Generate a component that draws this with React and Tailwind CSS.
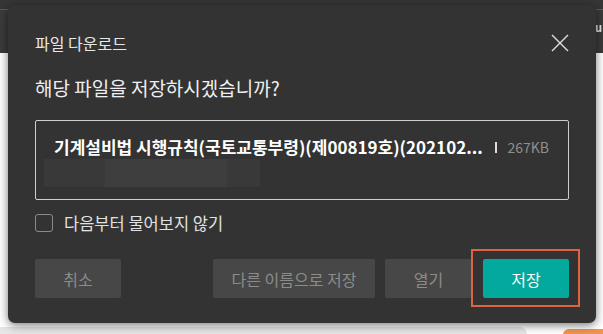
import React from "react";

const font = {
  fontFamily: '"Noto Sans CJK KR", "Noto Sans", sans-serif',
};

const App = () => {
  return (
    <div
      className="relative w-[603px] h-[334px] overflow-hidden bg-white flex flex-col"
      style={font}
    >
      {/* page behind the dialog */}
      <div className="h-[9px] bg-[#363636]" />
      <div className="h-px bg-[#5a5a5a]" />
      <div className="h-[43px] bg-[#3b3b3b] flex justify-end items-center">
        <span className="text-[11px] leading-none text-[#e6e6e6] font-bold mr-px mt-[-8px]">u</span>
      </div>
      <div className="flex-1 bg-white" />
      <div className="h-[7px] flex items-start">
        <div className="w-[527px] h-[7px] bg-[#e6e6e6] rounded-tr-[8px]" />
        <div className="flex-1" />
        <div className="w-[40px] h-[6px] mt-[2px] bg-[#f3934f] rounded-tl-[10px]" />
      </div>

      {/* dialog */}
      <div className="absolute left-[8px] top-[5px] w-[588px] h-[318px] rounded-[7px] bg-[#333333] shadow-[0_2px_10px_rgba(0,0,0,0.55)] px-[27px] flex flex-col">
        <div className="mt-[28px] h-[20px] flex items-center justify-between">
          <span className="text-[16px] text-[#e8e8e8]">파일 다운로드</span>
          <svg width="18" height="18" viewBox="0 0 18 18">
            <path d="M1 1 L17 17 M17 1 L1 17" stroke="#e0e0e0" strokeWidth="1.4" />
          </svg>
        </div>

        <div className="mt-[22px] h-[26px] flex items-center">
          <span className="text-[19px] text-[#efefef]">해당 파일을 저장하시겠습니까?</span>
        </div>

        <div className="mt-[19px] h-[80px] border border-[#cfcfcf] rounded-[2px] flex flex-col">
          <div className="mt-[15px] h-[22px] pl-[18px] pr-[19px] flex items-center">
            <span className="text-[17px] font-bold text-white whitespace-nowrap">
              기계설비법 시행규칙(국토교통부령)(제00819호)(202102...
            </span>
            <div className="flex-1" />
            <span className="w-[2px] h-[11px] bg-[#dcdcdc] mr-[10px]" />
            <span className="text-[14px] text-[#8f8f8f]">267KB</span>
          </div>
          <div className="mt-[1px] ml-[8px] h-[28px] flex">
            <div className="w-[61px] bg-[#393939]" />
            <div className="w-[122px] bg-[#3e3e3e]" />
            <div className="w-[33px] bg-[#393939]" />
          </div>
        </div>

        <div className="mt-[14px] h-[18px] flex items-center">
          <span className="w-[18px] h-[18px] border-[1.5px] border-[#8a8a8a] rounded-[3px]" />
          <span className="ml-[11px] text-[16.5px] text-[#e2e2e2]">다음부터 물어보지 않기</span>
        </div>

        <div className="mt-[27px] h-[39px] flex">
          <button className="w-[86px] h-[39px] bg-[#474747] rounded-[2px] text-[16px] text-[#8c8c8c]">
            취소
          </button>
          <div className="flex-1" />
          <button className="w-[162px] h-[39px] bg-[#474747] rounded-[2px] text-[16px] text-[#8c8c8c]">
            다른 이름으로 저장
          </button>
          <button className="ml-[10px] w-[87px] h-[39px] bg-[#474747] rounded-[2px] text-[16px] text-[#8c8c8c]">
            열기
          </button>
          <div className="relative ml-[11px]">
            <button className="w-[86px] h-[39px] bg-[#02a99c] rounded-[2px] text-[16px] text-white">
              저장
            </button>
            <div className="absolute left-[-12px] top-[-10px] right-[-11px] bottom-[-9px] border-2 border-[#dd6440]" />
          </div>
        </div>
      </div>
    </div>
  );
};

export default App;
